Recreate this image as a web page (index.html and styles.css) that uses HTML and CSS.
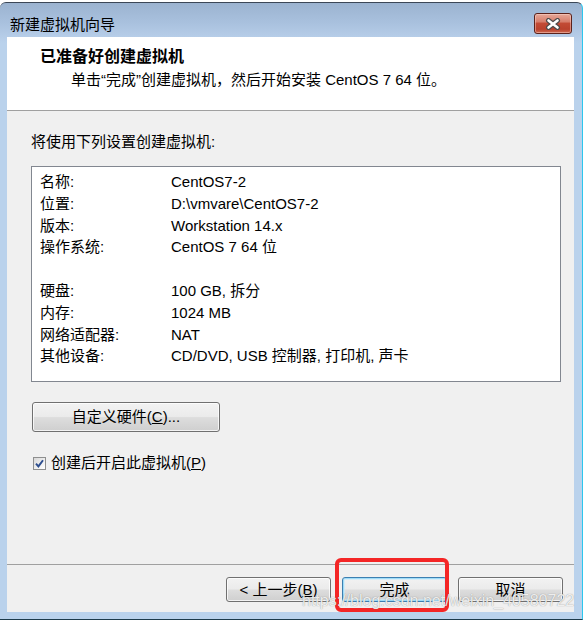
FILE: index.html
```html
<!DOCTYPE html>
<html lang="zh-CN">
<head>
<meta charset="utf-8">
<title>新建虚拟机向导</title>
<link rel="stylesheet" href="styles.css">
</head>
<body>
<div class="screen">
  <div class="window">
    <div class="titlebar">
      <span class="title">新建虚拟机向导</span>
      <span class="close">
        <svg width="16" height="12" viewBox="0 0 16 12">
          <path d="M3.5 2.5 L12.5 9.5 M12.5 2.5 L3.5 9.5" stroke="#4b4b4b" stroke-width="5" stroke-linecap="round" fill="none"/>
          <path d="M3.5 2.5 L12.5 9.5 M12.5 2.5 L3.5 9.5" stroke="#ffffff" stroke-width="2.6" stroke-linecap="round" fill="none"/>
        </svg>
      </span>
    </div>
    <div class="client">
      <div class="header">
        <div class="h-title">已准备好创建虚拟机</div>
        <div class="h-sub">单击“完成”创建虚拟机，然后开始安装 CentOS 7 64 位。</div>
      </div>
      <div class="main">
        <div class="intro">将使用下列设置创建虚拟机:</div>
        <div class="summary">
          <div class="row"><span class="k">名称:</span><span class="v">CentOS7-2</span></div>
          <div class="row"><span class="k">位置:</span><span class="v">D:\vmvare\CentOS7-2</span></div>
          <div class="row"><span class="k">版本:</span><span class="v">Workstation 14.x</span></div>
          <div class="row"><span class="k">操作系统:</span><span class="v">CentOS 7 64 位</span></div>
          <div class="row"></div>
          <div class="row"><span class="k">硬盘:</span><span class="v">100 GB, 拆分</span></div>
          <div class="row"><span class="k">内存:</span><span class="v">1024 MB</span></div>
          <div class="row"><span class="k">网络适配器:</span><span class="v">NAT</span></div>
          <div class="row"><span class="k">其他设备:</span><span class="v">CD/DVD, USB 控制器, 打印机, 声卡</span></div>
        </div>
        <button class="btn custom">自定义硬件(<u>C</u>)...</button>
        <label class="check">
          <span class="cb">
            <svg width="9" height="9" viewBox="0 0 9 9">
              <path d="M1 4.6 L3.4 7.4 L8 1.2" stroke="#2c4d8e" stroke-width="1.9" fill="none"/>
            </svg>
          </span>
          <span>创建后开启此虚拟机(<u>P</u>)</span>
        </label>
      </div>
      <div class="footer">
        <button class="btn">&lt; 上一步(<u>B</u>)</button>
        <button class="btn default">完成</button>
        <button class="btn">取消</button>
      </div>
    </div>
  </div>
  <div class="annot"></div>
  <div class="watermark">https://blog.csdn.net/weixin_40580722</div>
</div>
</body>
</html>
```
FILE: styles.css
```css
* {
  box-sizing: border-box;
  margin: 0;
  padding: 0;
}

html, body {
  width: 583px;
  height: 624px;
  overflow: hidden;
  background: #ffffff;
}

body {
  font-family: "Liberation Sans", "Noto Sans CJK SC", sans-serif;
  font-size: 15px;
  color: #000;
}

.screen {
  position: relative;
  width: 583px;
  height: 624px;
  padding-top: 2px;
  background: #ffffff;
}

.window {
  height: 618px;
  display: flex;
  flex-direction: column;
  padding: 0 8px 7px 7px;
  border-top: 1px solid #3b4757;
  border-right: 1px solid #2cc6ee;
  border-bottom: 1px solid #1d3a4a;
  border-radius: 6px 6px 0 0;
  background: linear-gradient(to bottom, #9bb3d0 0px, #a9c1de 20px, #b6cde8 34px, #bad2ec 40px, #bad2ec 100%);
}

.titlebar {
  height: 34px;
  flex: none;
  display: flex;
  align-items: flex-start;
}

.title {
  margin-top: 12px;
  padding-left: 3px;
  line-height: 20px;
  font-size: 15px;
}

.close {
  margin-left: auto;
  margin-right: 2px;
  margin-top: 10px;
  width: 38px;
  height: 21px;
  border: 1px solid #5b221b;
  border-radius: 3px;
  display: flex;
  align-items: center;
  justify-content: center;
  background: linear-gradient(to bottom, #e6a899 0%, #d77e6c 40%, #c24a35 50%, #b9412d 80%, #cf6a52 100%);
  box-shadow: inset 0 0 0 1px rgba(255, 220, 210, 0.45);
}

.client {
  height: 575px;
  flex: none;
  display: flex;
  flex-direction: column;
  background: #f0f0f0;
}

.header {
  height: 74px;
  flex: none;
  background: #ffffff;
  border-bottom: 1px solid #a0a0a0;
  padding: 10px 0 0 33px;
}

.h-title {
  font-weight: bold;
  font-size: 16px;
  line-height: 20px;
}

.h-sub {
  margin-top: 3px;
  padding-left: 31px;
  line-height: 20px;
}

.main {
  flex: 1;
  padding: 21px 0 0 24px;
}

.intro {
  line-height: 20px;
}

.summary {
  margin-top: 14px;
  width: 530px;
  height: 216px;
  border: 1px solid #828790;
  background: #ffffff;
  padding: 4px 0 0 8px;
}

.row {
  display: grid;
  grid-template-columns: 131px 1fr;
  height: 21.8px;
  line-height: 21.8px;
}

.btn {
  font-family: inherit;
  font-size: 15px;
  color: #000;
  width: 105px;
  height: 25px;
  padding: 0;
  border: 1px solid #707070;
  border-radius: 3px;
  background: linear-gradient(to bottom, #f2f2f2 0%, #ebebeb 48%, #dddddd 52%, #cfcfcf 100%);
  box-shadow: inset 0 0 0 1px rgba(255, 255, 255, 0.75);
  line-height: 21px;
  text-align: center;
}

.btn u {
  text-decoration: underline;
}

.custom {
  display: block;
  margin-top: 20px;
  margin-left: 1px;
  width: 188px;
  height: 30px;
  line-height: 26px;
}

.default {
  border-color: #3c7fb1;
  box-shadow: inset 0 0 0 1px #9fdcf8, inset 0 0 0 2px rgba(200, 235, 252, 0.6);
}

.check {
  margin-top: 21px;
  margin-left: 2px;
  height: 20px;
  display: flex;
  align-items: center;
  gap: 5px;
  line-height: 20px;
}

.cb {
  width: 13px;
  height: 13px;
  flex: none;
  border: 1px solid #8e8f8f;
  background: linear-gradient(135deg, #d8d8d8 0%, #f4f4f4 70%, #ffffff 100%);
  display: flex;
  align-items: center;
  justify-content: center;
}

.footer {
  height: 48px;
  flex: none;
  border-top: 1px solid #a0a0a0;
  padding: 12px 11px 0 0;
  display: flex;
  justify-content: flex-end;
  align-items: flex-start;
  gap: 11px;
}

.annot {
  position: absolute;
  left: 335px;
  top: 558px;
  width: 114px;
  height: 54px;
  border: 4px solid #f42626;
  border-radius: 6px;
}

.watermark {
  position: absolute;
  left: 302px;
  top: 592px;
  font-family: "Liberation Sans", sans-serif;
  font-size: 16px;
  line-height: 18px;
  color: rgba(255, 255, 255, 0.85);
  text-shadow: 0 0 1px rgba(90, 90, 90, 0.7);
  white-space: nowrap;
}
```
